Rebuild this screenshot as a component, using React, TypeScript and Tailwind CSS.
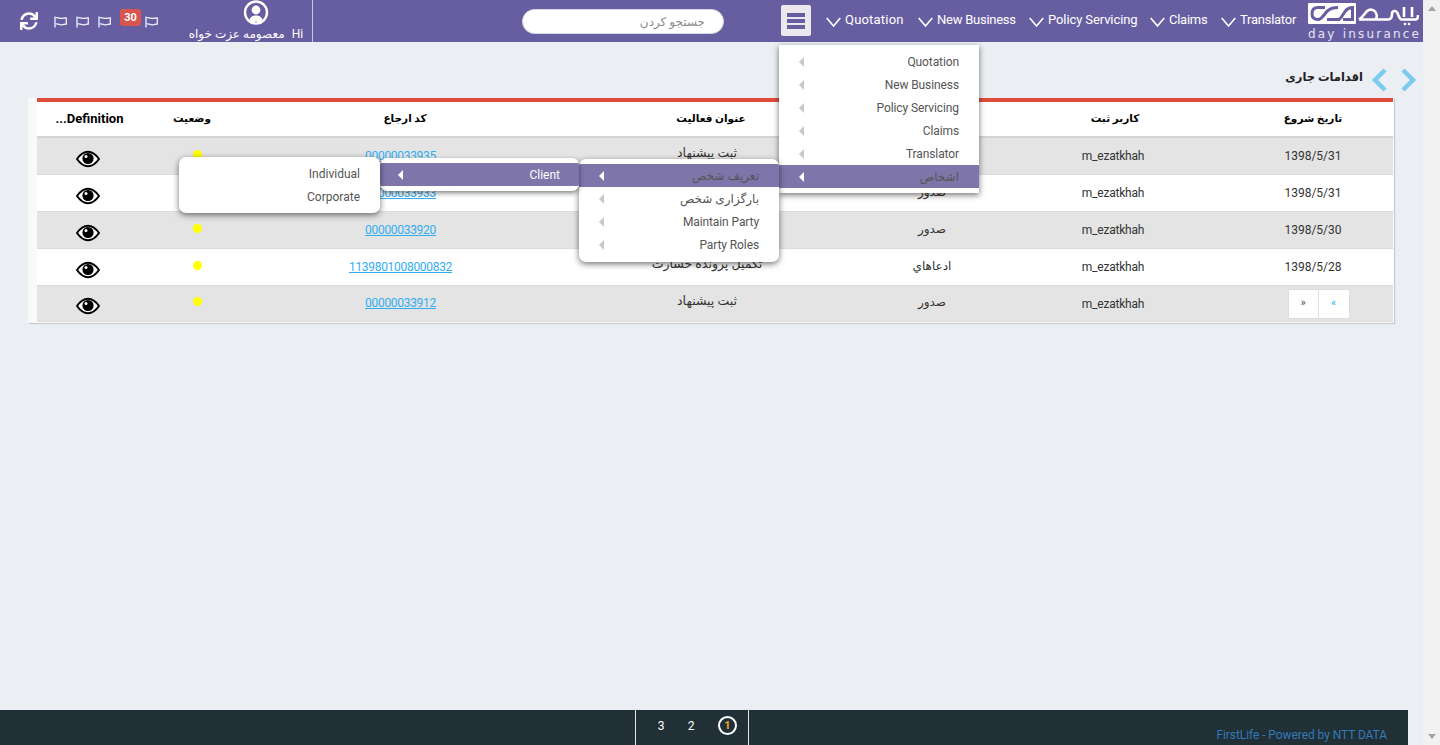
import React from "react";
import { FaSync } from "react-icons/fa";

const font = "font-['Roboto','DejaVu_Sans',sans-serif]";

function Chevron() {
  return (
    <svg width="15" height="10" viewBox="0 0 15 10" className="shrink-0 mt-[3px]">
      <polyline points="0.7,1 7.5,9 14.3,1" fill="none" stroke="#fff" strokeWidth="1.6" />
    </svg>
  );
}

function Flag() {
  return (
    <svg width="13" height="12" viewBox="0 0 13 12" className="shrink-0">
      <path d="M1 0.5V11.5" stroke="#d8f0ff" strokeWidth="1.4" fill="none" />
      <path d="M1.5 1.8C4 1 6 2.8 8.5 2.4C10 2.1 11 1.8 12.3 1.8V8C10.5 8 9.5 8.8 8 8.8C5.5 8.8 4 7.2 1.5 8" stroke="#f3f0fa" strokeWidth="1.3" fill="none" />
    </svg>
  );
}

function UserIcon() {
  return (
    <svg width="26" height="25" viewBox="0 0 26 25">
      <circle cx="13" cy="12.5" r="11" fill="none" stroke="#fff" strokeWidth="2.4" />
      <circle cx="13" cy="10" r="4.4" fill="#fff" />
      <path d="M6.5 20C7.5 16.5 10 15.5 13 15.5C16 15.5 18.5 16.5 19.5 20L15 23.5L13 21L11 23.5Z" fill="#fff" />
    </svg>
  );
}

function Logo() {
  return (
    <div className="w-[111px] shrink-0 flex flex-col">
      <svg width="111" height="25" viewBox="0 0 111 25" className="mt-[2px]">
        <rect x="0" y="1" width="48" height="21" rx="1" fill="#fff" />
        <path d="M17 5.5H10C5.5 5.5 4 8 4 11.5C4 15 6 17.5 10 17.5C14 17.5 16 12 20 8.5C22.5 6.3 25 5.5 30 5.5" fill="none" stroke="#675ea2" strokeWidth="3" />
        <path d="M19 17.5H31C34 15.5 35 12 37.5 9C39 7 41 5.5 44.5 5.5V17.5H35" fill="none" stroke="#675ea2" strokeWidth="3" />
        <path d="M51 17.5H66C69 17.5 69.5 14 68 11C66.5 7.5 62 6.5 59 9C57 11 55 15 51 17.5" fill="none" stroke="#fff" strokeWidth="2.6" />
        <path d="M68 17.5H80C83 17.5 84 15 84 12C84 8.5 88 8 89.5 11C91 14 91 17.5 94 17.5H108C110 17.5 110 15 110 13M96 5V15M104 5V15" fill="none" stroke="#fff" strokeWidth="2.6" />
        <circle cx="97" cy="22" r="1.3" fill="#fff" />
        <circle cx="101" cy="22" r="1.3" fill="#fff" />
      </svg>
      <span className="text-[12px] leading-[14px] tracking-[2.2px] text-[#e6e4f2] font-['DejaVu_Sans',sans-serif] whitespace-nowrap">day insurance</span>
    </div>
  );
}

const navItems: [string, string][] = [
  ["Quotation", "w-[59px] tracking-[0.2px]"],
  ["New Business", "w-[78px] tracking-[-0.25px]"],
  ["Policy Servicing", "w-[88px] tracking-[-0.1px]"],
  ["Claims", "w-[38px] tracking-[-0.25px]"],
  ["Translator", "w-[56px] tracking-[-0.25px]"],
];

function Header() {
  return (
    <header className="h-[42px] shrink-0 bg-[#675ea2] flex items-stretch text-white">
      <div className="w-[20px] shrink-0" />
      <div className="flex items-center h-[42px] w-[293px] shrink-0 border-r border-[#c9c6de]">
        <FaSync className="w-[18px] h-[18px] shrink-0 text-white" />
        <div className="ml-[16px] flex items-center gap-[9px] pt-[2px]">
          <Flag />
          <Flag />
          <Flag />
        </div>
        <span className="ml-[9px] mb-[8px] w-[21px] h-[17px] bg-[#d9534f] rounded-[3px] text-[11px] leading-[17px] font-bold text-center shrink-0">30</span>
        <div className="ml-[4px] pt-[2px]"><Flag /></div>
        <div className="ml-[32px] w-[114px] shrink-0 flex flex-col items-center">
          <div className="h-[25px] -mt-[1px] ml-[17px]"><UserIcon /></div>
          <div className="text-[12px] leading-[16px] whitespace-nowrap flex gap-[7px] mt-[1px] tracking-[0.1px] -ml-[2px]">
            <span dir="rtl">معصومه عزت خواه</span>
            <span>Hi</span>
          </div>
        </div>
      </div>
      <div className="ml-[209px] mt-[9px] w-[202px] h-[25px] shrink-0 rounded-full bg-white border border-[#d8d8e4] text-right pr-[18px] text-[12px] leading-[24px] text-[#8c8c8c]" dir="rtl">
        جستجو کردن
      </div>
      <div className="ml-[57px] mt-[5px] w-[30px] h-[31px] shrink-0 bg-[#ece8ee] rounded-[2px] flex flex-col items-center justify-center gap-[2px]">
        <span className="block w-[18px] h-[4px] bg-[#675ea2]" />
        <span className="block w-[18px] h-[4px] bg-[#675ea2]" />
        <span className="block w-[18px] h-[4px] bg-[#675ea2]" />
      </div>
      <nav className="ml-[15px] flex items-center h-[40px] gap-[14px] shrink-0">
        {navItems.map(([label, w]) => (
          <div key={label} className="flex items-center gap-[4px]">
            <Chevron />
            <span className={`${w} text-[13px] whitespace-nowrap`}>{label}</span>
          </div>
        ))}
      </nav>
      <div className="ml-[12px]"><Logo /></div>
    </header>
  );
}

function Arrow({ active }: { active?: boolean }) {
  return (
    <span className={`w-0 h-0 border-y-[5px] border-y-transparent border-r-[5px] shrink-0 ${active ? "border-r-white" : "border-r-[#c8c8c8]"}`} />
  );
}

function MenuItem({ label, active }: { label: string; active?: boolean }) {
  return (
    <div className={`h-[23px] flex items-center justify-between pl-[20px] pr-[20px] ${active ? "bg-[#7e76ab]" : ""}`}>
      <Arrow active={active} />
      <span className="text-[12px] tracking-[-0.1px] text-[#555] whitespace-nowrap" dir="auto">{label}</span>
    </div>
  );
}

function Menus() {
  return (
    <>
      <div className="absolute left-[779px] top-[45px] w-[200px] h-[148px] bg-white pt-[5px] shadow-[0_2px_6px_rgba(0,0,0,0.55)] z-10">
        <MenuItem label="Quotation" />
        <MenuItem label="New Business" />
        <MenuItem label="Policy Servicing" />
        <MenuItem label="Claims" />
        <MenuItem label="Translator" />
        <MenuItem label="اشخاص" active />
      </div>
      <div className="absolute left-[579px] top-[159px] w-[200px] h-[103px] bg-white pt-[5px] rounded-[7px] overflow-hidden shadow-[0_2px_6px_rgba(0,0,0,0.55)] z-20">
        <MenuItem label="تعریف شخص" active />
        <MenuItem label="بارگزاری شخص" />
        <MenuItem label="Maintain Party" />
        <MenuItem label="Party Roles" />
      </div>
      <div className="absolute left-[380px] top-[158px] w-[199px] h-[33px] bg-white pt-[5px] rounded-[7px] overflow-hidden shadow-[0_2px_5px_rgba(0,0,0,0.5)] z-30">
        <div className="h-[23px] flex items-center justify-between pl-[18px] pr-[19px] bg-[#7e76ab]">
          <Arrow active />
          <span className="text-[12px] text-white">Client</span>
        </div>
      </div>
      <div className="absolute left-[179px] top-[157px] w-[201px] h-[56px] bg-white pt-[5px] rounded-[7px] shadow-[0_2px_6px_rgba(0,0,0,0.55)] z-40">
        <div className="h-[23px] flex items-center justify-end pr-[20px] text-[12px] text-[#555]">Individual</div>
        <div className="h-[23px] flex items-center justify-end pr-[20px] text-[12px] text-[#555]">Corporate</div>
      </div>
    </>
  );
}

function Eye() {
  return (
    <svg width="24" height="18" viewBox="0 0 24 18">
      <path d="M1 9C4.5 4 8 1.8 12 1.8C16 1.8 19.5 4 23 9C19.5 14 16 16.2 12 16.2C8 16.2 4.5 14 1 9Z" fill="#fff" stroke="#000" strokeWidth="2" />
      <circle cx="12" cy="8.5" r="5.6" fill="#000" />
      <circle cx="10" cy="6.4" r="1.5" fill="#fff" />
    </svg>
  );
}

const cols = "grid grid-cols-[174px_212px_150px_292px_320px_106px_102px]";

const rows = [
  { date: "1398/5/31", group: "صدور", title: "ثبت پیشنهاد", code: "00000033935", h: "h-[37px]" },
  { date: "1398/5/31", group: "صدور", title: "ثبت پیشنهاد", code: "00000033933", h: "h-[37px]" },
  { date: "1398/5/30", group: "صدور", title: "ثبت پیشنهاد", code: "00000033920", h: "h-[37px]" },
  { date: "1398/5/28", group: "ادعاهاي", title: "تکمیل پرونده خسارت", code: "1139801008000832", h: "h-[37px]" },
  { date: "", group: "صدور", title: "ثبت پیشنهاد", code: "00000033912", h: "h-[36px]" },
];

function Table() {
  return (
    <div className="ml-[28px] w-[1366px] pl-[9px] pr-[1px] pb-[1px] bg-[#f9f9f9] shadow-[1px_1px_1px_rgba(0,0,0,0.15)]">
      <div className="h-[4px] bg-[#df4d3a]" />
      <div dir="rtl" className={`${cols} h-[36px] bg-white border-b-2 border-[#d4d4d4] items-center text-[10.5px] font-bold text-black`}>
        <div className="text-center pl-[14px]">تاریخ شروع</div>
        <div className="text-center pl-[4px]">کاربر ثبت</div>
        <div />
        <div className="text-center">عنوان فعالیت</div>
        <div className="text-center">کد ارجاع</div>
        <div className="text-center">وضعیت</div>
        <div className="text-center text-[13px] pl-[3px]" dir="ltr">...Definition</div>
      </div>
      {rows.map((r, i) => (
        <div
          key={i}
          dir="rtl"
          className={`${cols} ${r.h} items-center text-[12px] text-[#333] border-b border-[#dcdcdc] ${i % 2 === 0 ? "bg-[#e4e4e4]" : "bg-white"}`}
        >
          {r.date ? (
            <div className="text-center pl-[14px]" dir="ltr">{r.date}</div>
          ) : (
            <div className="flex justify-center pl-[25px]" dir="ltr">
              <span className="w-[31px] h-[30px] bg-white border border-[#ddd] flex items-center justify-center text-[11px] text-[#555]">»</span>
              <span className="w-[31px] h-[30px] bg-white border border-[#ddd] border-l-0 flex items-center justify-center text-[11px] text-[#31aef2]">«</span>
            </div>
          )}
          <div className="text-center tracking-[-0.2px]" dir="ltr">m_ezatkhah</div>
          <div className="text-center -mt-[3px]">{r.group}</div>
          <div className="text-center text-[12.5px] -mt-[5px] pr-[8px]">{r.title}</div>
          <div className="text-center -mt-[1px] pr-[9px] tracking-[-0.3px]" dir="ltr">
            <span className="text-[#31aef2] underline">{r.code}</span>
          </div>
          <div className="flex justify-center -mt-[4px]">
            <span className="block w-[9px] h-[9px] rounded-full bg-[#ffff00] ml-[10px]" />
          </div>
          <div className="flex justify-center pt-[5px]">
            <Eye />
          </div>
        </div>
      ))}
    </div>
  );
}

function Title() {
  return (
    <div dir="rtl" className="h-[56px] flex items-center gap-[10px] pr-[6px] pt-[19px]">
      <svg width="17" height="24" viewBox="0 0 17 24" className="shrink-0"><polyline points="3,2 13,12 3,22" fill="none" stroke="#7ccbf0" strokeWidth="4.4" /></svg>
      <svg width="18" height="24" viewBox="0 0 18 24" className="shrink-0 mr-[1px] ml-[-2px]"><polyline points="14,2 4,12 14,22" fill="none" stroke="#7ccbf0" strokeWidth="4.4" /></svg>
      <span className="text-[11.5px] font-bold text-[#222] -mt-[4px]">اقدامات جاری</span>
    </div>
  );
}

function Footer() {
  return (
    <footer className="h-[35px] w-[1408px] shrink-0 bg-[#212f36] flex text-white">
      <div className="ml-[635px] w-[114px] h-full border-x border-[#e6e6e6] flex items-start shrink-0">
        <span className="ml-[21px] mt-[8px] w-[8px] text-center text-[12px] leading-[16px]">3</span>
        <span className="ml-[22px] mt-[8px] w-[8px] text-center text-[12px] leading-[16px]">2</span>
        <span className="ml-[23px] mt-[6px] w-[19px] h-[19px] rounded-full border-2 border-white text-center text-[11px] leading-[15px] font-bold text-[#f5a623]">1</span>
      </div>
      <div className="flex-1 flex justify-end items-end pr-[21px] pb-[2px]">
        <span className="text-[12px] leading-[16px] tracking-[-0.07px] text-[#337ab7]">FirstLife - Powered by NTT DATA</span>
      </div>
    </footer>
  );
}

function Scrollbar() {
  return (
    <div className="w-[17px] h-[745px] shrink-0 bg-[#f1f1f1] flex flex-col justify-between items-center py-[6px]">
      <span className="w-0 h-0 border-x-[4px] border-x-transparent border-b-[5px] border-b-[#a3a3a3]" />
      <span className="w-0 h-0 border-x-[4px] border-x-transparent border-t-[5px] border-t-[#a3a3a3]" />
    </div>
  );
}

export default function App() {
  return (
    <div className={`${font} relative w-[1440px] h-[745px] overflow-hidden flex bg-[#ebeef3]`}>
      <div className="w-[1423px] h-[745px] shrink-0 flex flex-col">
        <Header />
        <main className="flex-1 min-h-0">
          <Title />
          <Table />
        </main>
        <Footer />
      </div>
      <Scrollbar />
      <Menus />
    </div>
  );
}
